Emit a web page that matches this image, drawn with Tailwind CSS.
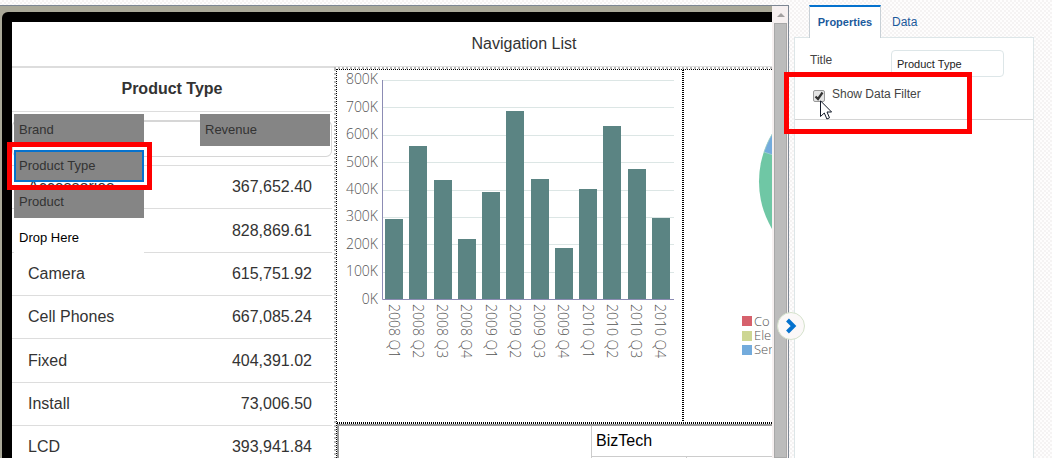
<!DOCTYPE html>
<html lang="en">
<head>
<meta charset="utf-8">
<title>Navigation List designer</title>
<script src="https://cdn.jsdelivr.net/npm/@tailwindcss/browser@4"></script>
</head>
<body class="relative flex h-screen overflow-hidden bg-[#fcfafa] bg-[repeating-conic-gradient(#f5f3f3_0_25%,#fefdfd_0_50%)] bg-[length:4px_4px] font-['Liberation_Sans',Arial,sans-serif] text-[#333]">

  <!-- Design canvas -->
  <main class="mt-[5px] flex min-w-0 flex-1 border-t border-r border-[#7d8794] bg-[#aaa999]">
    <div class="mt-1.5 ml-0.5 min-w-0 flex-1 overflow-hidden rounded-tl-md bg-black pt-2.5 pl-2.5">
      <div class="flex h-full w-[1024px] flex-col bg-white">
        <h1 class="flex h-[46px] shrink-0 items-center justify-center border-b-2 border-[#ddd] text-base">Navigation List</h1>
        <div class="flex min-h-0 flex-1">

          <!-- List column -->
          <section class="relative w-80 shrink-0">
            <h2 class="flex h-11 items-center justify-center border-b border-[#ddd] pb-0.5 text-base font-bold">Product Type</h2>
            <div class="h-[54px] border-b border-[#ddd] pt-2">
              <div class="h-[37px] rounded-md border border-t-2 border-[#d6d6d6]"></div>
            </div>
            <table class="w-full border-separate border-spacing-0 text-base [&_td]:border-b [&_td]:border-[#ddd] [&_td:first-child]:pl-4 [&_td:last-child]:pr-5 [&_td:last-child]:text-right">
              <tbody>
                <tr class="h-[43px]"><td>Accessories</td><td>367,652.40</td></tr>
                <tr class="h-11"><td></td><td>828,869.61</td></tr>
                <tr class="h-[43px]"><td>Camera</td><td>615,751.92</td></tr>
                <tr class="h-[43px]"><td>Cell Phones</td><td>667,085.24</td></tr>
                <tr class="h-11"><td>Fixed</td><td>404,391.02</td></tr>
                <tr class="h-[43px]"><td>Install</td><td>73,006.50</td></tr>
                <tr class="h-[43px]"><td>LCD</td><td>393,941.84</td></tr>
              </tbody>
            </table>
            <div class="absolute inset-x-0.5 top-[46px] flex items-start justify-between text-[13px]">
              <div class="flex w-[130px] flex-col gap-1">
                <button class="h-8 bg-[#858585] pl-[5px] text-left">Brand</button>
                <button class="h-8 border-2 border-[#0572ce] bg-[#858585] pl-[3px] text-left">Product Type</button>
                <button class="h-8 bg-[#858585] pl-[5px] text-left">Product</button>
                <div class="flex h-8 items-center bg-white pl-[5px] text-black">Drop Here</div>
              </div>
              <button class="h-8 w-[130px] bg-[#858585] pl-[5px] text-left">Revenue</button>
            </div>
          </section>

          <!-- Report grid -->
          <div class="ml-0.5 -mt-px flex flex-1 flex-col">
            <div class="h-0.5 shrink-0 bg-[repeating-linear-gradient(90deg,#bbb_0_2px,#fff_2px_4px)]"></div>
            <div class="flex min-h-0 flex-1">
              <div class="w-0.5 bg-[repeating-linear-gradient(180deg,#bbb_0_2px,#fff_2px_4px)]"></div>
              <div class="flex flex-1 flex-col border-t border-l border-dotted border-black">
                <div class="flex h-[352px] shrink-0">
                  <svg class="h-[352px] w-[345px] shrink-0" viewBox="337 70 345 352" font-family="'Open Sans','Noto Sans',sans-serif" font-size="14" font-weight="300" fill="#555" role="img" aria-label="Revenue by quarter">
                    <path d="M383 80.500H674M383 107.500H674M383 135.500H674M383 162.500H674M383 190.500H674M383 217.500H674M383 244.500H674M383 272.500H674" stroke="#dce6e5"/>
                    <g fill="#5b8483">
                      <path d="M385 219h18v80h-18zM409 146h18v153h-18zM434 180h18v119h-18zM458 239h18v60h-18zM482 192h18v107h-18zM506 111h18v188h-18zM531 179h18v120h-18zM555 248h18v51h-18zM579 189h18v110h-18zM603 126h18v173h-18zM628 169h18v130h-18zM652 218h18v81h-18z"/>
                    </g>
                    <path d="M382.500 80V299.500H674" fill="none" stroke="#8c8cb4"/>
                    <g text-anchor="end">
                      <text x="378" y="84">800K</text><text x="378" y="112">700K</text><text x="378" y="139">600K</text><text x="378" y="167">500K</text><text x="378" y="194">400K</text><text x="378" y="221">300K</text><text x="378" y="249">200K</text><text x="378" y="276">100K</text><text x="378" y="304">0K</text>
                    </g>
                    <text transform="translate(389 304) rotate(90)">2008 Q1</text>
                    <text transform="translate(413 304) rotate(90)">2008 Q2</text>
                    <text transform="translate(437 304) rotate(90)">2008 Q3</text>
                    <text transform="translate(461 304) rotate(90)">2008 Q4</text>
                    <text transform="translate(486 304) rotate(90)">2009 Q1</text>
                    <text transform="translate(510 304) rotate(90)">2009 Q2</text>
                    <text transform="translate(534 304) rotate(90)">2009 Q3</text>
                    <text transform="translate(558 304) rotate(90)">2009 Q4</text>
                    <text transform="translate(583 304) rotate(90)">2010 Q1</text>
                    <text transform="translate(607 304) rotate(90)">2010 Q2</text>
                    <text transform="translate(631 304) rotate(90)">2010 Q3</text>
                    <text transform="translate(655 304) rotate(90)">2010 Q4</text>
                  </svg>
                  <div class="w-0.5 shrink-0 bg-[repeating-linear-gradient(180deg,#000_0_1px,#fff_1px_2px)]"></div>
                  <svg class="h-[352px] w-[301px] shrink-0" viewBox="684 70 301 352" font-family="'Open Sans','Noto Sans',sans-serif" font-size="13" font-weight="300" fill="#555" role="img" aria-label="Revenue by product">
                    <circle cx="852" cy="181.500" r="93" fill="#6fc7a5"/>
                    <path d="M852 181.500L764 152A93 93 0 0 1 852 88.500Z" fill="#73abdc" stroke="#a9d3d3" stroke-width=".7"/>
                    <path fill="#d6616c" d="M742 316h10v10h-10z"/><path fill="#cdd693" d="M742 331h10v10h-10z"/><path fill="#73abdc" d="M742 345h10v10h-10z"/>
                    <text x="754" y="326">Co</text><text x="754" y="340">Ele</text><text x="754" y="354">Ser</text>
                  </svg>
                </div>
                <div class="h-0.5 shrink-0 bg-[repeating-linear-gradient(90deg,#000_0_1px,#fff_1px_2px)]"></div>
                <table class="w-full border-separate border-spacing-0 border-t-2 border-l-2 border-[#999] text-base text-black">
                  <tbody>
                    <tr class="h-[31px]"><td rowspan="2" class="w-[252px]"></td><td colspan="2" class="border-b border-l border-[#ccc] pl-1">BizTech</td></tr>
                    <tr class="h-[31px]"><td class="w-[95px] border-l border-[#ccc]"></td><td class="border-l border-[#ccc]"></td></tr>
                  </tbody>
                </table>
              </div>
            </div>
          </div>
        </div>
      </div>
    </div>

    <!-- Scrollbar -->
    <div class="flex w-4 shrink-0 flex-col bg-[#f6f0f0] pl-0.5">
      <div class="flex h-[17px] items-center justify-center">
        <svg class="h-1 w-2" viewBox="0 0 8 4"><path d="M0 4L4 0l4 4z" fill="#a3a0a0"/></svg>
      </div>
      <div class="mr-px flex-1 border border-[#a8a8a8] bg-[#bcbcbc]"></div>
    </div>
  </main>

  <!-- Property inspector -->
  <aside class="mt-[5px] mr-[18px] ml-[5px] flex w-60 shrink-0 flex-col text-xs text-[#444]">
    <nav class="z-10 -mb-px flex pl-[15px] text-[#1b5a9c]">
      <a href="#properties" class="flex h-[33px] w-[72px] items-center justify-center border-x border-t-2 border-x-[#c8d0d6] border-t-[#0572ce] bg-white text-[11px] font-bold">Properties</a>
      <a href="#data" class="flex h-[33px] items-center pl-[11px]">Data</a>
    </nav>
    <form class="flex-1 border border-b-0 border-[#dde6e8] bg-white">
      <div class="h-[82px] border-b border-[#d4d4d4] pt-3 pl-[15px]">
        <div class="flex h-[27px] items-start">
          <label for="title" class="w-[81px] pt-0.5">Title</label>
          <input id="title" type="text" value="Product Type" class="h-[27px] w-[113px] rounded-sm border border-[#dde6e8] bg-white pl-[5px] text-[11px] text-[#222]">
        </div>
        <div class="flex items-start pt-[9px] pl-[3px]">
          <input id="filter" type="checkbox" checked class="mt-1 size-3 shrink-0 appearance-none rounded-xs border border-[#999] bg-[#e4e4e4]">
          <svg class="pointer-events-none mt-1 -ml-3 size-3" viewBox="0 0 12 12"><path d="M2.500 6.500L5 9l4.500-6.500" fill="none" stroke="#333" stroke-width="2.200"/></svg>
          <label for="filter" class="pl-[7px]">Show Data Filter</label>
        </div>
      </div>
    </form>
  </aside>

  <!-- Panel toggle -->
  <button aria-label="Toggle panel" class="absolute top-[312px] right-[247px] z-10 flex size-7 items-center justify-center rounded-full border border-[#d5e2cc] bg-[#fbf8f8]">
    <svg class="size-4" viewBox="0 0 16 16"><path d="M4.500 2L10.500 8l-6 6" fill="none" stroke="#0572ce" stroke-width="4"/></svg>
  </button>

  <!-- Callouts and pointer -->
  <div class="pointer-events-none absolute top-[142px] left-[7px] z-20 h-12 w-[145px] border-5 border-[#f00]"></div>
  <div class="pointer-events-none absolute top-[72px] right-20 z-20 h-[62px] w-[188px] border-5 border-[#f00]"></div>
  <svg class="pointer-events-none absolute top-[100px] right-[220px] z-20 h-5 w-3" viewBox="0 0 12 20"><path d="M.5.800V16.500L4.300 13l2.600 6 2.600-1.200L7 12h4.600z" fill="#fff" stroke="#111827"/></svg>
</body>
</html>
